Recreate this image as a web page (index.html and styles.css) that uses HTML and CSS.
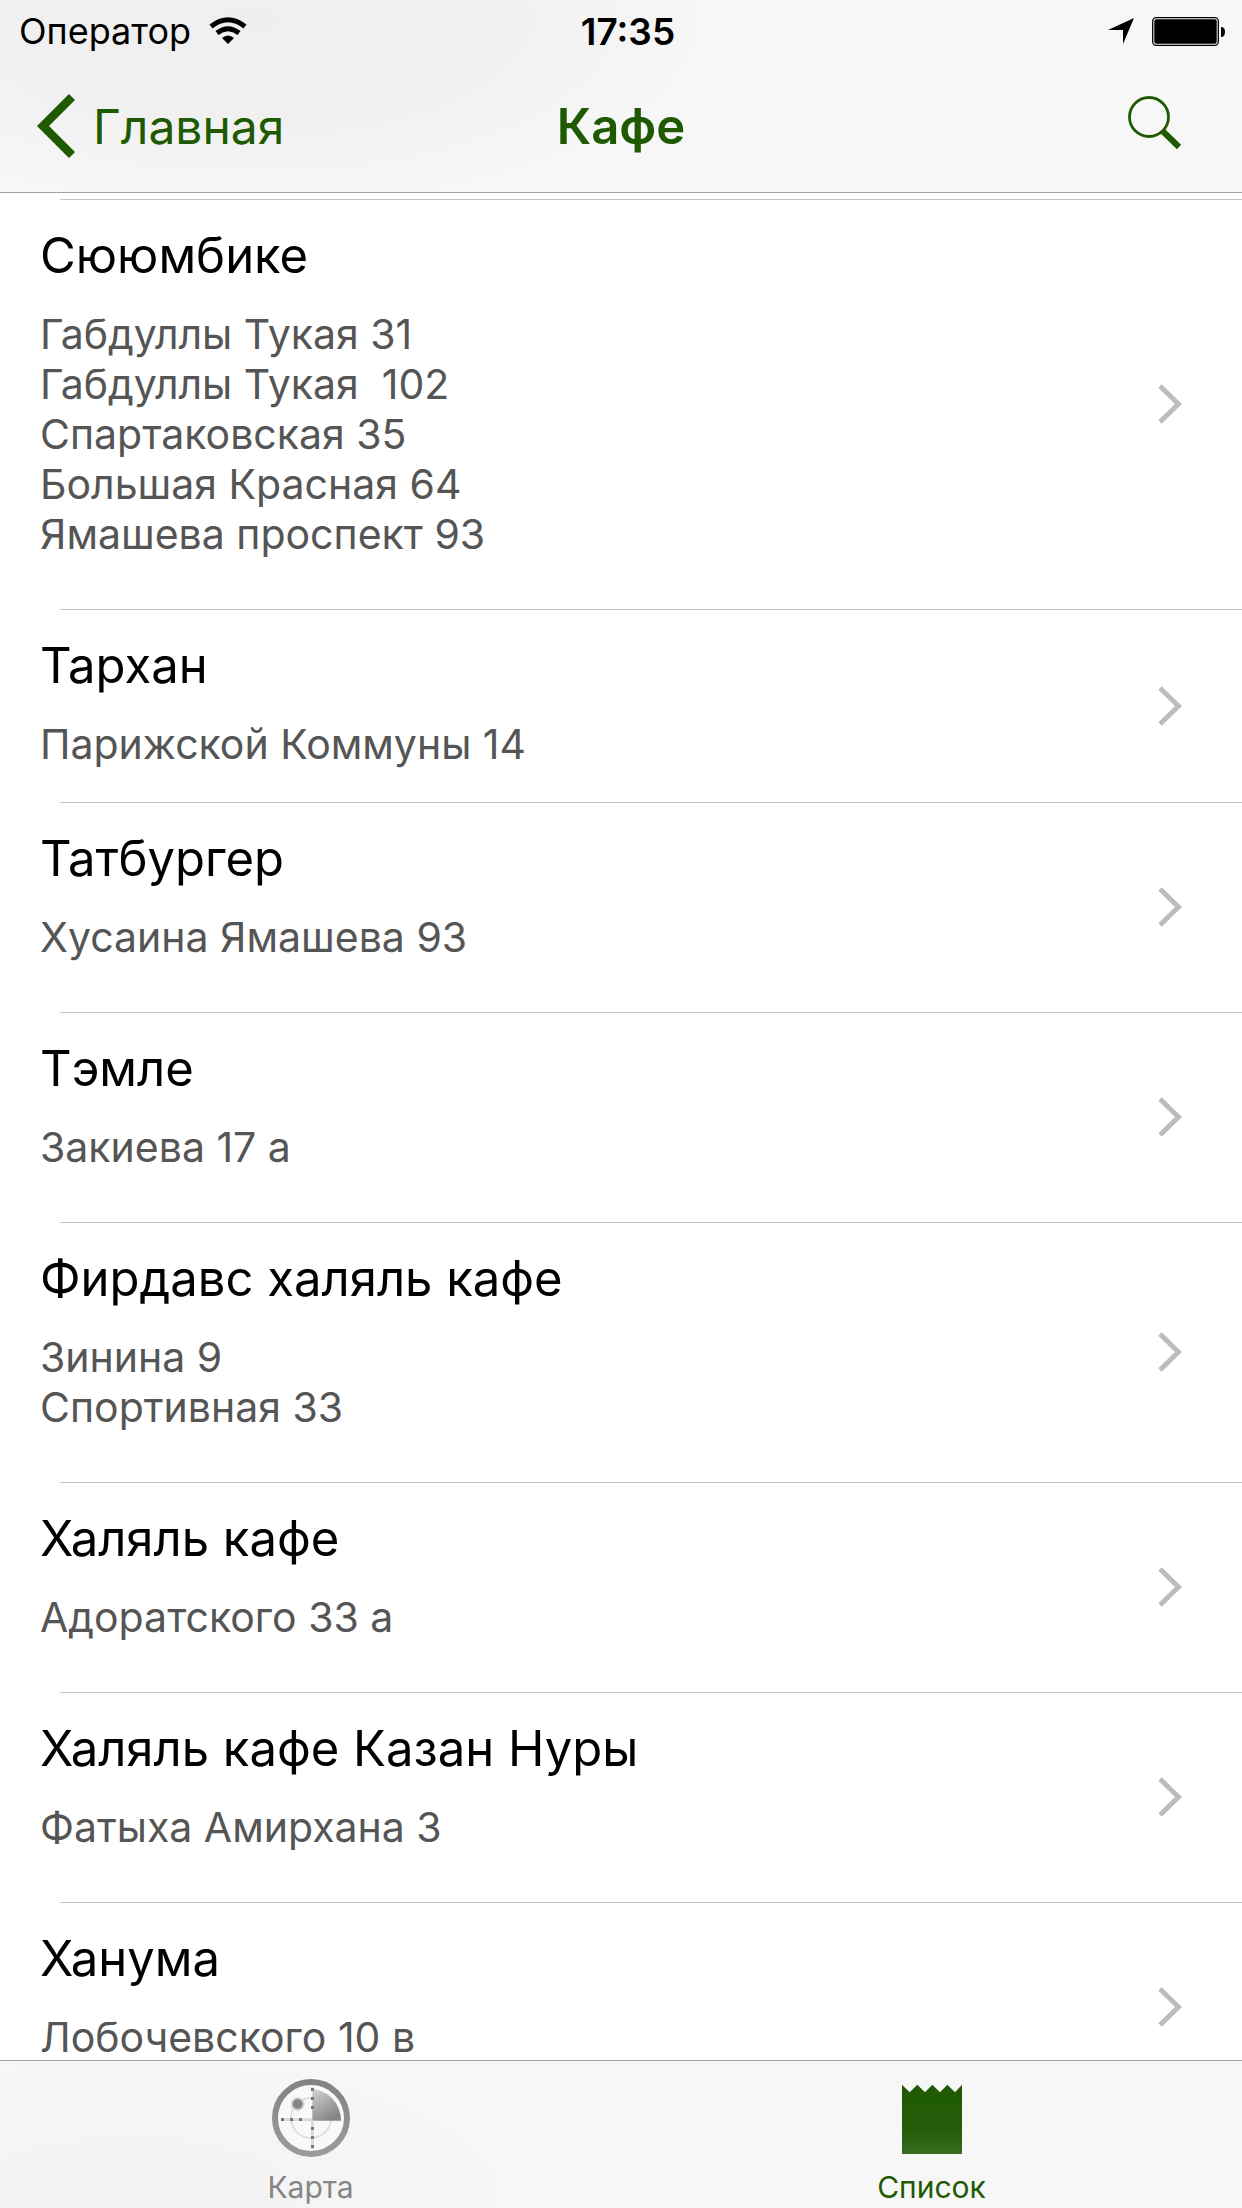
FILE: index.html
```html
<!DOCTYPE html>
<html lang="ru">
<head>
<meta charset="utf-8">
<meta name="viewport" content="width=device-width, initial-scale=1">
<title>Кафе</title>
<link rel="stylesheet" href="styles.css">
</head>
<body>
<svg class="sprite" aria-hidden="true">
  <symbol id="chevron" viewBox="0 0 24 40"><path d="M2 2l18.500 18L2 38" fill="none" stroke="#bcbbc1" stroke-width="5"/></symbol>
</svg>
<header class="header">
  <div class="status">
    <div class="status-left">
      <span>Оператор</span>
      <svg class="wifi" viewBox="0 0 38 28" aria-hidden="true">
        <g fill="none" stroke="#000" stroke-width="5"><path d="M2 9.500Q19-4 36 9.500"/><path d="M8 16Q19 7.500 30 16"/></g>
        <path d="M13 21Q19 16 25 21L19 27z"/>
      </svg>
    </div>
    <time class="clock">17:35</time>
    <div class="status-right">
      <svg class="location" viewBox="0 0 26 26" aria-hidden="true"><path d="M26 0L15 26V12H0z"/></svg>
      <svg class="battery" viewBox="0 0 73 29" aria-hidden="true"><rect x=".7" y=".7" width="65.600" height="27.600" rx="3.500" fill="none" stroke="#000" stroke-width="1.300"/><rect x="2.300" y="2.300" width="62.400" height="24.400" rx="2"/><path d="M69 10q4 0 4 5t-4 5z"/></svg>
    </div>
  </div>
  <nav class="nav">
    <a class="back" href="#home">
      <svg class="back-icon" viewBox="0 0 38 64" aria-hidden="true"><path d="M35 3L6 32l29 29" fill="none" stroke="#1f5a03" stroke-width="8.500"/></svg>
      Главная
    </a>
    <h1 class="title">Кафе</h1>
    <button class="search" type="button" aria-label="Поиск">
      <svg class="search-icon" viewBox="0 0 54 54" aria-hidden="true"><g fill="none" stroke="#1f5a03"><circle cx="21" cy="21" r="19.500" stroke-width="2.800"/><path d="M34 34.500l17 16.500" stroke-width="6"/></g></svg>
    </button>
  </nav>
</header>
<main class="content">
  <ul class="places">
    <li><a class="place" href="#1"><div class="info"><h2 class="name">Сююмбике</h2><p class="address">Габдуллы Тукая 31
Габдуллы Тукая  102
Спартаковская 35
Большая Красная 64
Ямашева проспект 93</p></div><svg class="chevron"><use href="#chevron"/></svg></a></li>
    <li><a class="place" href="#2"><div class="info info-compact"><h2 class="name">Тархан</h2><p class="address">Парижской Коммуны 14</p></div><svg class="chevron"><use href="#chevron"/></svg></a></li>
    <li><a class="place" href="#3"><div class="info"><h2 class="name">Татбургер</h2><p class="address">Хусаина Ямашева 93</p></div><svg class="chevron"><use href="#chevron"/></svg></a></li>
    <li><a class="place" href="#4"><div class="info"><h2 class="name">Тэмле</h2><p class="address">Закиева 17 а</p></div><svg class="chevron"><use href="#chevron"/></svg></a></li>
    <li><a class="place" href="#5"><div class="info"><h2 class="name">Фирдавс халяль кафе</h2><p class="address">Зинина 9
Спортивная 33</p></div><svg class="chevron"><use href="#chevron"/></svg></a></li>
    <li><a class="place" href="#6"><div class="info"><h2 class="name">Халяль кафе</h2><p class="address">Адоратского 33 а</p></div><svg class="chevron"><use href="#chevron"/></svg></a></li>
    <li><a class="place" href="#7"><div class="info"><h2 class="name">Халяль кафе Казан Нуры</h2><p class="address">Фатыха Амирхана 3</p></div><svg class="chevron"><use href="#chevron"/></svg></a></li>
    <li><a class="place" href="#8"><div class="info"><h2 class="name">Ханума</h2><p class="address">Лобочевского 10 в</p></div><svg class="chevron"><use href="#chevron"/></svg></a></li>
  </ul>
</main>
<nav class="tabs">
  <a class="tab" href="#map">
    <svg class="tab-icon" viewBox="123 87 234 234" aria-hidden="true">
      <defs>
        <linearGradient id="ring" x1="0" y1="0" x2="0" y2="1"><stop offset="0" stop-color="#838383"/><stop offset="1" stop-color="#9b9b9b"/></linearGradient>
        <linearGradient id="sweep" x1="0" y1="0" x2=".6" y2="1"><stop offset="0" stop-color="#d2d2d2"/><stop offset="1" stop-color="#858585"/></linearGradient>
        <radialGradient id="blip"><stop offset=".5" stop-color="#858585"/><stop offset=".65" stop-color="#c2c2c2"/><stop offset="1" stop-color="#f7f7f7" stop-opacity="0"/></radialGradient>
      </defs>
      <circle cx="240" cy="204" r="99" fill="#f9f9f9"/>
      <circle cx="240" cy="204" r="108" fill="none" stroke="url(#ring)" stroke-width="18"/>
      <circle cx="240" cy="204" r="60" fill="none" stroke="#dedede" stroke-width="6"/>
      <path d="M244 118A88 94 0 0 1 330 212H244z" fill="url(#sweep)"/>
      <path d="M244 212v84M150 209h94M244 112v6" stroke="#d8d8d8" stroke-width="8"/>
      <path d="M240 114h9v9h-9zM240 141h9v9h-9zM240 168h9v9h-9zM240 231h9v9h-9zM240 258h9v9h-9zM240 285h9v9h-9zM150 204h9v9h-9zM177 204h9v9h-9zM204 204h9v9h-9z" fill="#777"/>
      <circle cx="200" cy="162" r="25" fill="url(#blip)"/>
    </svg>
    Карта
  </a>
  <a class="tab tab-active" href="#list" aria-current="page">
    <svg class="tab-icon" viewBox="126 87 234 234" aria-hidden="true">
      <defs><linearGradient id="bag" x1="0" y1="0" x2="0" y2="1"><stop offset="0" stop-color="#1f5a03"/><stop offset=".65" stop-color="#245d0a"/><stop offset="1" stop-color="#376d1e"/></linearGradient></defs>
      <path d="M153 104L176 127L199 104L222 127L244 104L267 127L289 104L312 127L333 104V312H153z" fill="url(#bag)"/>
    </svg>
    Список
  </a>
</nav>
</body>
</html>
```
FILE: styles.css
```css
* { box-sizing: border-box; }

body {
  margin: 0;
  height: 100vh;
  display: flex;
  flex-direction: column;
  background: #fff;
  color: #000;
  font-family: Inter, "Liberation Sans", sans-serif;
}

a { color: inherit; text-decoration: none; }
svg { display: block; flex: none; }
.sprite { position: absolute; width: 0; height: 0; }

.header {
  flex: none;
  border-bottom: 1px solid #a0a0a0;
  background: radial-gradient(ellipse 460px 190px at 250px 20px, #efefef, #f0f0f0 50%, #f7f7f7);
}

.status {
  height: 62px;
  padding: 0 5px 0 19px;
  display: grid;
  grid-template-columns: 1fr auto 1fr;
  align-items: center;
  font-size: 36px;
}
.status-left, .status-right { display: flex; align-items: center; gap: 18px; }
.status-right { justify-content: flex-end; padding-right: 12px; }
.wifi { width: 38px; height: 28px; }
.clock { font-size: 37px; font-weight: 600; }
.location { width: 26px; height: 26px; }
.battery { width: 73px; height: 29px; }

.nav {
  height: 130px;
  padding: 0 37px 2px;
  display: grid;
  grid-template-columns: 1fr auto 1fr;
  align-items: center;
  color: #1f5a03;
  font-size: 48px;
}
.back { display: flex; align-items: center; gap: 18px; }
.back-icon { width: 38px; height: 64px; }
.title { margin: 0; font-size: 49px; font-weight: 600; }
.search {
  justify-self: end;
  padding: 0 23px 6px 0;
  border: 0;
  background: none;
}
.search-icon { width: 54px; height: 54px; }

.content {
  flex: 1;
  min-height: 0;
  padding-top: 6px;
  overflow-y: auto;
  scrollbar-width: none;
}
.places { margin: 0; padding: 0; list-style: none; }
.place {
  padding: 0 60px 0 40px;
  display: flex;
  align-items: center;
  justify-content: space-between;
  background: linear-gradient(#c4c4c6, #c4c4c6) 60px 0 / 100% 1px no-repeat;
}
.info { padding: 27px 0 50px; }
.info-compact { padding-bottom: 33px; }
.name { margin: 0 0 23px; font-size: 49px; line-height: 60px; font-weight: 400; }
.address {
  margin: 0;
  color: #555;
  font-size: 41px;
  line-height: 50px;
  white-space: pre;
}
.chevron { width: 24px; height: 40px; }

.tabs {
  flex: none;
  padding: 18px 0 1px;
  display: grid;
  grid-template-columns: 1fr 1fr;
  border-top: 1px solid #a0a0a0;
  background: radial-gradient(ellipse 400px 150px at 130px 140px, #f2f2f2, #f7f7f7);
}
.tab {
  display: flex;
  flex-direction: column;
  align-items: center;
  gap: 10px;
  color: #858585;
  font-size: 30px;
  line-height: 40px;
}
.tab-active { color: #1f5a03; }
.tab-icon { width: 78px; height: 78px; }
```
